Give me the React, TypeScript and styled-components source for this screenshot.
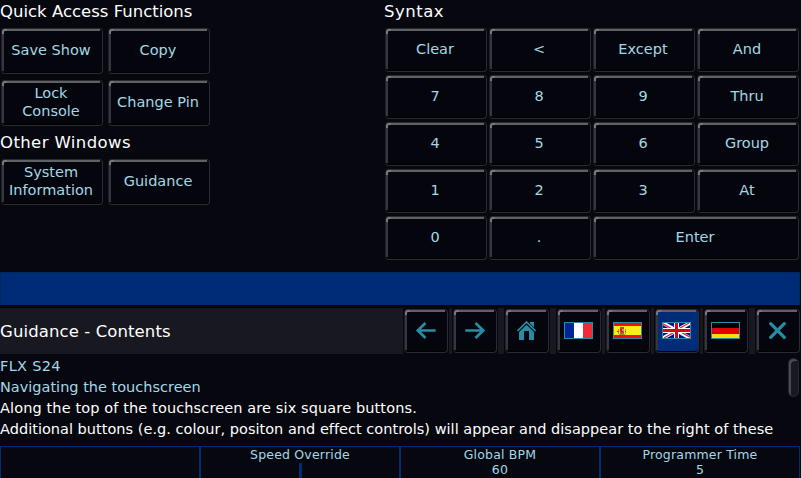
import React from 'react';
import styled, { createGlobalStyle } from 'styled-components';

const GlobalStyle = createGlobalStyle`
  * { box-sizing: border-box; }
  html, body { margin: 0; background: #06070f; overflow: hidden; }
  body { font-family: "DejaVu Sans", sans-serif; color: #fff; }
`;

const Screen = styled.div`
  width: 801px;
  height: 478px;
  display: flex;
  flex-direction: column;
  overflow: hidden;
  background: #06070f;
  border-right: 1px solid #0b0b0c;
`;

const Panels = styled.main`
  display: flex;
  height: 272px;
`;

const LeftPanel = styled.section`
  width: 384px;
`;

const RightPanel = styled.section`
  width: 416px;
`;

const Heading = styled.h2<{ $height: number; $pad: number; $track?: number }>`
  margin: 0;
  height: ${(p) => p.$height}px;
  padding-top: ${(p) => p.$pad}px;
  font-size: 16.5px;
  letter-spacing: ${(p) => p.$track ?? 0}px;
  line-height: 22px;
  font-weight: 400;
  white-space: nowrap;
`;

const FunctionGrid = styled.div`
  display: grid;
  grid-template-columns: repeat(2, 102px);
  grid-auto-rows: 46px;
  gap: 6px 5px;
  padding-left: 1px;
`;

const KeyGrid = styled.div`
  display: grid;
  grid-template-columns: repeat(4, 102px);
  grid-auto-rows: 44px;
  gap: 3px 2px;
  padding-left: 1px;
`;

const Button = styled.button<{ $wide?: boolean; $active?: boolean }>`
  position: relative;
  display: flex;
  align-items: center;
  justify-content: center;
  min-width: 0;
  margin: 0;
  padding: 0 2px 2px 0;
  grid-column: ${(p) => (p.$wide ? 'span 2' : 'auto')};
  border: 1px solid #2a2b33;
  border-top-color: #2a2b31;
  border-left-color: #1e1f26;
  border-radius: 4px;
  background: ${(p) => (p.$active ? '#002c77' : '#05060d')};
  box-shadow: inset 0 -1px 0 #000002;
  color: #a3d8e6;
  font: 14.5px/18px "DejaVu Sans", sans-serif;
  text-align: center;
  white-space: nowrap;

  &::before {
    content: '';
    position: absolute;
    inset: 0 2px 2px 0;
    border-top: 2px solid #606167;
    border-left: 2px solid #36373e;
    border-top-left-radius: 3px;
  }

  &::after {
    content: '';
    position: absolute;
    top: 0;
    left: 0;
    width: 3px;
    height: 3px;
    border-top: 2px solid #77787d;
    border-left: 2px solid #77787d;
    border-top-left-radius: 3px;
  }
`;

const CommandLine = styled.div`
  height: 33px;
  background: #002c77;
  border: 1px solid #002a5c;
  border-bottom: 0;
`;

const TitleBar = styled.header`
  display: flex;
  height: 46px;
  margin-top: 3px;
  background: #181821;
`;

const Title = styled.h1`
  flex: none;
  width: 403px;
  margin: 0;
  font-size: 16.5px;
  letter-spacing: 0.1px;
  font-weight: 400;
  line-height: 47px;
`;

const Tool = styled.div<{ $gap?: number }>`
  display: flex;
  flex: none;
  width: 46px;
  height: 46px;
  margin-left: ${(p) => p.$gap ?? 0}px;
  padding: 1px;
  background: #06070f;
`;

const ToolButton = styled(Button)`
  width: 44px;
  height: 44px;
  padding: 0 1px 1px 0;

  svg { display: block; flex: none; }
`;

const Guide = styled.section`
  position: relative;
  height: 92px;
  padding-top: 2px;
  font-size: 14.5px;
  line-height: 21px;
  white-space: nowrap;
`;

const Line = styled.div<{ $accent?: boolean; $track?: number }>`
  color: ${(p) => (p.$accent ? '#a3d8e6' : '#fff')};
  letter-spacing: ${(p) => p.$track ?? 0}px;
`;

const Thumb = styled.div`
  position: absolute;
  top: 4px;
  right: 1px;
  width: 11px;
  height: 39px;
  border: 1px solid #26272e;
  border-radius: 5px;
  background: #181821;
  box-shadow: inset 2px 2px 0 #4a4b52;
`;

const Encoders = styled.footer`
  display: grid;
  grid-template-columns: repeat(4, 200px);
  height: 32px;
`;

const Encoder = styled.div`
  border: 1px solid #002c77;
  border-bottom: 0;
  display: flex;
  flex-direction: column;
  align-items: center;
  color: #a3d8e6;
  font-size: 12.5px;
  letter-spacing: 0.18px;
  line-height: 15px;
  white-space: nowrap;
`;

const Value = styled.span`
  font-size: 12.5px;
`;

const Tick = styled.i`
  width: 3px;
  height: 15px;
  margin: 1px 0 0 1px;
  flex: none;
  background: #002c77;
`;

const TEAL = '#278ca4';

const Arrow = ({ flip }: { flip?: boolean }) => (
  <svg width="21" height="17" viewBox="0 0 21 17" fill="none" stroke={TEAL} strokeWidth="2.7">
    <g transform={flip ? 'translate(22 0) scale(-1 1)' : undefined}>
      <path d="M2.5 8.5H20.7M10.5 1L2.8 8.5L10.5 16" />
    </g>
  </svg>
);

const Home = () => (
  <svg width="19" height="19" viewBox="0 0 19 19">
    <path d="M0.5 10L9.5 1L18.5 10" fill="none" stroke={TEAL} strokeWidth="1.7" />
    <path d="M13 1H17V6.5L13 2.5Z" fill={TEAL} />
    <path d="M2 11L9.5 3.7L17 11V19H12V10H7V19H2Z" fill={TEAL} />
  </svg>
);

const Cross = () => (
  <svg width="17" height="17" viewBox="0 0 17 17" stroke={TEAL} strokeWidth="3.2" strokeLinecap="round">
    <path d="M1.7 1.7L15.3 15.3M15.3 1.7L1.7 15.3" />
  </svg>
);

const Flag = ({ children }: { children: React.ReactNode }) => (
  <svg width="29" height="17" viewBox="0 0 29 17" shapeRendering="crispEdges">
    <rect width="29" height="17" fill={TEAL} />
    <svg x="1" y="1" width="27" height="15" viewBox="0 0 27 15">
      {children}
    </svg>
  </svg>
);

const France = () => (
  <Flag>
    <rect width="9" height="15" fill="#002495" />
    <rect x="9" width="9" height="15" fill="#fff" />
    <rect x="18" width="9" height="15" fill="#ef2b39" />
  </Flag>
);

const Spain = () => (
  <Flag>
    <rect width="27" height="15" fill="#fa0a0c" />
    <rect y="3" width="27" height="9" fill="#ffed16" />
    <rect x="4" y="6" width="1" height="5" fill="#a99a80" />
    <rect x="11" y="6" width="1" height="5" fill="#a99a80" />
    <rect x="3" y="8" width="2" height="1" fill="#c2301c" />
    <rect x="11" y="8" width="1" height="1" fill="#c2301c" />
    <rect x="6" y="4" width="4" height="2" fill="#bd4a18" />
    <rect x="6" y="6" width="4" height="5" fill="#b95a3c" />
    <rect x="6" y="6" width="2" height="2" fill="#d01818" />
    <rect x="8" y="6" width="2" height="2" fill="#b6a08a" />
    <rect x="7" y="8" width="2" height="1" fill="#5a3c70" />
    <rect x="5" y="11" width="6" height="1" fill="#b98b20" />
  </Flag>
);

const Britain = () => (
  <Flag>
    <rect width="27" height="15" fill="#00148c" />
    <g shapeRendering="auto">
      <path d="M0 0L27 15M27 0L0 15" stroke="#fff" strokeWidth="3.6" />
      <path d="M0 0.8L12 7.4M27 14.2L15 7.6M26 0L14 6.8M1 15L13 8.3" stroke="#d81830" strokeWidth="1.1" />
    </g>
    <path d="M13.5 0V15M0 7.5H27" stroke="#fff" strokeWidth="5" />
    <path d="M13.5 0V15M0 7.5H27" stroke="#d80518" strokeWidth="3" />
  </Flag>
);

const Germany = () => (
  <Flag>
    <rect width="27" height="5" fill="#000" />
    <rect y="5" width="27" height="6" fill="#e00008" />
    <rect y="11" width="27" height="4" fill="#ffdc08" />
  </Flag>
);

const KEYS = [
  'Clear', '<', 'Except', 'And',
  '7', '8', '9', 'Thru',
  '4', '5', '6', 'Group',
  '1', '2', '3', 'At',
  '0', '.', 'Enter',
];

const TOOLS = [
  { id: 'back', gap: 0, icon: <Arrow /> },
  { id: 'forward', gap: 3, icon: <Arrow flip /> },
  { id: 'home', gap: 6, icon: <Home /> },
  { id: 'fr', gap: 6, icon: <France /> },
  { id: 'es', gap: 3, icon: <Spain /> },
  { id: 'en', gap: 3, icon: <Britain />, active: true },
  { id: 'de', gap: 3, icon: <Germany /> },
  { id: 'close', gap: 6, icon: <Cross /> },
];

export default function App() {
  return (
    <>
      <GlobalStyle />
      <Screen>
        <Panels>
          <LeftPanel>
            <Heading $height={28} $pad={1}>Quick Access Functions</Heading>
            <FunctionGrid>
              <Button>Save Show</Button>
              <Button>Copy</Button>
              <Button>Lock<br />Console</Button>
              <Button>Change Pin</Button>
            </FunctionGrid>
            <Heading $height={33} $pad={6} $track={0.4}>Other Windows</Heading>
            <FunctionGrid>
              <Button>System<br />Information</Button>
              <Button>Guidance</Button>
            </FunctionGrid>
          </LeftPanel>
          <RightPanel>
            <Heading $height={28} $pad={1} $track={0.5}>Syntax</Heading>
            <KeyGrid>
              {KEYS.map((k) => (
                <Button key={k} $wide={k === 'Enter'}>{k}</Button>
              ))}
            </KeyGrid>
          </RightPanel>
        </Panels>
        <CommandLine />
        <TitleBar>
          <Title>Guidance - Contents</Title>
          {TOOLS.map((t) => (
            <Tool key={t.id} $gap={t.gap}>
              <ToolButton $active={t.active} aria-label={t.id}>{t.icon}</ToolButton>
            </Tool>
          ))}
        </TitleBar>
        <Guide>
          <Line $accent $track={0.3}>FLX S24</Line>
          <Line $accent>Navigating the touchscreen</Line>
          <Line $track={0.12}>Along the top of the touchscreen are six square buttons.</Line>
          <Line $track={0.02}>Additional buttons (e.g. colour, positon and effect controls) will appear and disappear to the right of these</Line>
          <Thumb />
        </Guide>
        <Encoders>
          <Encoder />
          <Encoder>Speed Override<Tick /></Encoder>
          <Encoder><span>Global BPM</span><Value>60</Value></Encoder>
          <Encoder><span>Programmer Time</span><Value>5</Value></Encoder>
        </Encoders>
      </Screen>
    </>
  );
}
